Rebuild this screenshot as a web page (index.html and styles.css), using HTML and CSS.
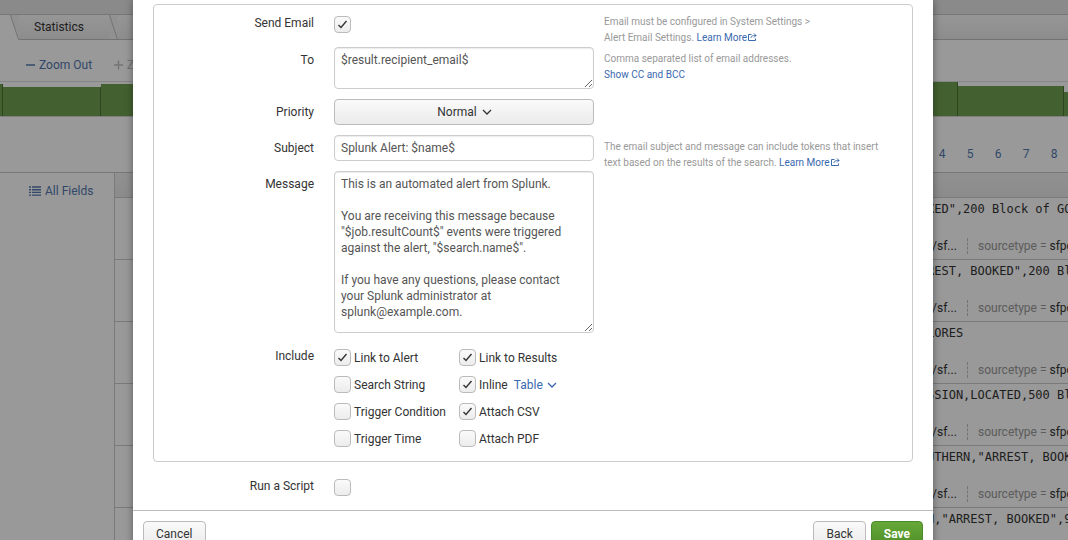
FILE: index.html
```html
<!DOCTYPE html>
<html lang="en">
<head>
<meta charset="utf-8">
<title>Save As Alert</title>
<link rel="stylesheet" href="styles.css">
</head>
<body>
<div class="app">
  <div class="page">
    <div class="jobbar"></div>
    <nav class="tabs">
      <span class="tab-lead"></span>
      <svg class="tab-edge" viewBox="0 0 9 25"><path class="edge-fill" d="M0 0H9V25Z"/><path class="edge-line" d="M.5 0 8.5 24.5H9"/></svg>
      <a class="tab" href="#statistics">Statistics</a>
      <svg class="tab-edge" viewBox="0 0 9 25"><path class="edge-fill" d="M0 0H9V25H0Z"/><path class="edge-line" d="M.5 0 8.5 24.5M0 24.5H9"/></svg>
      <span class="tab-rest"></span>
    </nav>
    <div class="zoombar">
      <a class="zoom" href="#out"><svg class="sign" viewBox="0 0 10 10"><path d="M0 5H9"/></svg>Zoom Out</a>
      <a class="zoom zoom-off" href="#in"><svg class="sign" viewBox="0 0 10 10"><path d="M0 5H9M4.5 .5V9.5"/></svg>Zoom to Selection</a>
    </div>
    <div class="timeline">
      <span class="bar bar-edge-left"></span>
      <span class="bar bar-first"></span>
      <span class="bar bar-second"></span>
      <span class="bar bar-tall"></span>
      <span class="bar bar-late"></span>
      <span class="bar bar-edge-right"></span>
    </div>
    <nav class="pager">
      <a href="#p4">4</a><a href="#p5">5</a><a href="#p6">6</a><a href="#p7">7</a><a href="#p8">8</a>
    </nav>
    <div class="results">
      <aside class="fields">
        <a class="all-fields" href="#fields"><svg class="list-icon" viewBox="0 0 12 10"><path d="M0 1H2M3 1H12M0 3.7H2M3 3.7H12M0 6.4H2M3 6.4H12M0 9.1H2M3 9.1H12"/></svg>All Fields</a>
      </aside>
      <div class="events">
        <div class="events-head"></div>
        <div class="event"><code class="raw">KED",200 Block of GO</code><div class="meta"><span class="source">/sf...</span><span class="type">sourcetype = <b>sfpd</b></span></div></div>
        <div class="event"><code class="raw">REST, BOOKED",200 Bl</code><div class="meta"><span class="source">/sf...</span><span class="type">sourcetype = <b>sfpd</b></span></div></div>
        <div class="event"><code class="raw">LORES</code><div class="meta"><span class="source">/sf...</span><span class="type">sourcetype = <b>sfpd</b></span></div></div>
        <div class="event"><code class="raw">SSION,LOCATED,500 Bl</code><div class="meta"><span class="source">/sf...</span><span class="type">sourcetype = <b>sfpd</b></span></div></div>
        <div class="event"><code class="raw">UTHERN,"ARREST, BOOK</code><div class="meta"><span class="source">/sf...</span><span class="type">sourcetype = <b>sfpd</b></span></div></div>
        <div class="event"><code class="raw">N,"ARREST, BOOKED",9</code><div class="meta"><span class="source">/sf...</span><span class="type">sourcetype = <b>sfpd</b></span></div></div>
      </div>
    </div>
  </div>

  <div class="backdrop">
    <form class="modal" role="dialog" aria-label="Save As Alert">
      <div class="panel">
        <div class="row row-toggle">
          <label class="name" for="send">Send Email</label>
          <div class="control"><input class="check check-solo" id="send" type="checkbox" checked></div>
          <p class="help">Email must be configured in System Settings &gt;<br>Alert Email Settings. <a href="#email-help">Learn More<svg class="ext" viewBox="0 0 9 8"><path d="M3.5 1.5H.5V7.5H7.5V5.5M3 5C3 3.2 4 2.5 8 2.5M6 .5 8 2.5 6 4.5"/></svg></a></p>
        </div>
        <div class="row">
          <label class="name" for="to">To</label>
          <div class="control"><textarea class="field field-to" id="to">$result.recipient_email$</textarea></div>
          <p class="help">Comma separated list of email addresses.<br><a href="#cc">Show CC and BCC</a></p>
        </div>
        <div class="row">
          <label class="name" for="priority">Priority</label>
          <div class="control picker">
            <select class="select" id="priority"><option>Normal</option></select>
            <svg class="chevron" viewBox="0 0 10 6"><path d="M1 1 5 5 9 1"/></svg>
          </div>
        </div>
        <div class="row">
          <label class="name" for="subject">Subject</label>
          <div class="control"><input class="field" id="subject" type="text" value="Splunk Alert: $name$"></div>
          <p class="help">The email subject and message can include tokens that insert text based on the results of the search. <a href="#token-help">Learn More<svg class="ext" viewBox="0 0 9 8"><path d="M3.5 1.5H.5V7.5H7.5V5.5M3 5C3 3.2 4 2.5 8 2.5M6 .5 8 2.5 6 4.5"/></svg></a></p>
        </div>
        <div class="row">
          <label class="name" for="message">Message</label>
          <div class="control"><textarea class="field field-message" id="message">This is an automated alert from Splunk.

You are receiving this message because "$job.resultCount$" events were triggered against the alert, "$search.name$".

If you have any questions, please contact your Splunk administrator at splunk@example.com.</textarea></div>
        </div>
        <div class="row">
          <span class="name" id="include">Include</span>
          <div class="choices" role="group" aria-labelledby="include">
            <label class="choice"><input class="check" type="checkbox" checked>Link to Alert</label>
            <label class="choice"><input class="check" type="checkbox" checked>Link to Results</label>
            <label class="choice"><input class="check" type="checkbox">Search String</label>
            <div class="choice"><input class="check" id="inline" type="checkbox" checked><label for="inline">Inline</label>
              <span class="format"><select class="format-select" aria-label="Inline format"><option>Table</option></select><svg class="chevron" viewBox="0 0 10 6"><path d="M1 1 5 5 9 1"/></svg></span></div>
            <label class="choice"><input class="check" type="checkbox">Trigger Condition</label>
            <label class="choice"><input class="check" type="checkbox" checked>Attach CSV</label>
            <label class="choice"><input class="check" type="checkbox">Trigger Time</label>
            <label class="choice"><input class="check" type="checkbox">Attach PDF</label>
          </div>
        </div>
      </div>
      <div class="row row-toggle row-script">
        <label class="name" for="script">Run a Script</label>
        <div class="control"><input class="check check-solo" id="script" type="checkbox"></div>
      </div>
      <footer class="footer">
        <button class="btn btn-cancel" type="button">Cancel</button>
        <button class="btn" type="button">Back</button>
        <button class="btn btn-save" type="submit">Save</button>
      </footer>
    </form>
  </div>
</div>
</body>
</html>
```

FILE: styles.css
```css
* { box-sizing: border-box; }
body {
  margin: 0;
  font: 12px/16px Roboto, "Liberation Sans", sans-serif;
  color: #333;
  background: #fff;
}
a { color: #3a69b0; text-decoration: none; }
svg { fill: none; stroke: currentColor; }
.app { position: relative; height: 100vh; overflow: hidden; }

/* Search page behind the dialog */
.page { display: flex; flex-direction: column; min-height: 100%; }
.page a { color: #5379af; }
.jobbar { height: 15px; background: #e6e6e6; border-bottom: 1px solid #c6c6c6; }
.tabs { display: flex; height: 25px; }
.tab-lead { width: 10px; }
.tab-edge { width: 9px; height: 25px; flex: none; }
.edge-fill { fill: #f2f2f2; stroke: none; }
.edge-line { stroke: #c0c0c0; }
.tab, .tab-rest {
  background: linear-gradient(#fafafa, #ebebeb);
  border-bottom: 1px solid #c0c0c0;
}
.page .tab { width: 90px; padding-left: 15px; line-height: 24px; color: #333; }
.tab-rest { flex: 1; }
.zoombar { display: flex; gap: 22px; height: 41px; padding: 17px 0 0 26px; }
.zoom { display: flex; align-items: center; gap: 3px; height: 16px; white-space: nowrap; }
.sign { width: 10px; height: 10px; stroke-width: 1.5; }
.page .zoom-off { color: #c2c2c2; }
.timeline {
  display: flex;
  align-items: flex-end;
  height: 36px;
  border-top: 1px solid #e0e0e0;
  border-bottom: 1px solid #d4d4d4;
}
.bar { background: #71a250; border-right: 1px solid #4e7334; }
.bar-edge-left { width: 3px; height: 32px; }
.bar-first { width: 98px; height: 29px; }
.bar-second { flex: 1; height: 32px; }
.bar-tall { flex: 1; height: 34px; }
.bar-late { width: 106px; height: 30px; }
.bar-edge-right { width: 4px; height: 24px; border: 0; }
.pager { display: flex; justify-content: flex-end; height: 55px; padding-top: 29px; }
.pager a { width: 28px; text-align: center; }
.results { display: flex; flex: 1; border-top: 1px solid #c6c6c6; }
.fields { width: 115px; padding: 10px 0 0 29px; border-right: 1px solid #ccc; }
.all-fields { display: flex; align-items: center; gap: 4px; }
.list-icon { width: 12px; height: 10px; stroke-width: 1.4; }
.events { flex: 1; min-width: 0; }
.events-head { height: 25px; background: linear-gradient(#f2f2f2, #e8e8e8); border-bottom: 1px solid #ccc; }
.event {
  display: grid;
  grid-template-columns: 1fr 141px;
  align-content: space-between;
  height: 62px;
  padding: 3px 0 5px;
  border-bottom: 1px solid #ccc;
  overflow: hidden;
  white-space: nowrap;
}
.raw { grid-column: 2; font: 12px/16px "DejaVu Sans Mono", monospace; overflow: hidden; }
.meta { grid-column: 2; display: flex; gap: 10px; height: 16px; overflow: hidden; }
.source { flex: none; width: 41px; padding-left: 5px; border-right: 1px dashed #c0c0c0; }
.type { color: #999; }
.type b { font-weight: 400; color: #333; }

/* Dialog */
.backdrop {
  position: absolute;
  inset: 0;
  padding-right: 2px;
  background: rgba(0, 0, 0, .4);
}
.modal {
  max-width: 800px;
  margin: 0 auto;
  padding-top: 4px;
  background: #fff;
  box-shadow: 0 0 8px rgba(0, 0, 0, .4);
}
.panel { margin: 0 20px; padding: 5px 0 14px; border: 1px solid #ccc; border-radius: 4px; }
.row { display: grid; grid-template-columns: 160px 260px 1fr; column-gap: 20px; }
.row-toggle { min-height: 37px; }
.name { line-height: 26px; text-align: right; }
.control { display: flex; margin-bottom: 10px; }
.help { margin: 0 30px 0 -10px; padding-top: 4px; font-size: 10px; color: #999; }
.ext { width: 9px; height: 8px; margin-left: 1px; }
.field {
  display: block;
  width: 100%;
  height: 26px;
  padding: 4px 6px;
  border: 1px solid #ccc;
  border-radius: 4px;
  box-shadow: inset 0 1px 1px rgba(0, 0, 0, .08);
  background: #fff;
  font: inherit;
  color: #555;
}
.field-to { height: 42px; }
.field-message { height: 162px; padding-right: 16px; }
.picker, .format { display: grid; align-items: center; }
.picker > *, .format > * { grid-area: 1 / 1; }
.select, .btn {
  height: 26px;
  border: 1px solid #bbb;
  border-radius: 4px;
  background: linear-gradient(#fafafa, #ebebeb);
  font: inherit;
  color: #333;
}
.select { appearance: none; width: 100%; padding: 0 14px 0 0; text-align-last: center; }
.chevron { width: 10px; height: 6px; stroke-width: 1.3; pointer-events: none; }
.picker .chevron { justify-self: center; margin-left: 46px; }
.check {
  appearance: none;
  flex: none;
  width: 17px;
  height: 17px;
  margin: 0;
  border: 1px solid #bbb;
  border-radius: 4px;
  background: linear-gradient(#fafafa, #ececec);
}
.check:checked {
  background:
    url("data:image/svg+xml,%3Csvg xmlns='http://www.w3.org/2000/svg' viewBox='0 0 15 15'%3E%3Cpath d='M3.5 8 6 10.5 11.5 4' fill='none' stroke='%23333' stroke-width='1.4'/%3E%3C/svg%3E") center / 15px,
    linear-gradient(#fafafa, #ececec);
}
.check-solo { margin-top: 6px; }
.choices { display: grid; grid-template-columns: 125px 1fr; gap: 10px 0; margin-top: 6px; white-space: nowrap; }
.choice { display: flex; align-items: center; gap: 3px; height: 17px; }
.format { margin-left: 3px; color: #3a69b0; }
.format-select {
  appearance: none;
  padding: 0 13px 0 0;
  border: 0;
  background: none;
  font: inherit;
  color: inherit;
}
.format .chevron { justify-self: end; }
.row-script { margin: 11px 21px 0; padding-bottom: 1px; }
.footer { display: flex; gap: 5px; padding: 10px; border-top: 1px solid #bbb; }
.btn { padding: 0 12px; }
.btn-cancel { margin-right: auto; }
.btn-save { border-color: #4b8a2a; background: linear-gradient(#66a838, #4f8f28); color: #fff; font-weight: 700; }
```
